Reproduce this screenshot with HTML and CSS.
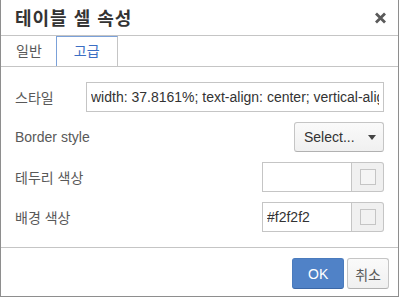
FILE: index.html
```
<!DOCTYPE html>
<html lang="ko">
<head>
    <meta charset="UTF-8">
    <title>테이블 셀 속성</title>
    <link rel="stylesheet" href="styles.css">
</head>
<body>
    <div class="dialog">
        <div class="head">
            <h1>테이블 셀 속성</h1>
            <button class="close" type="button" aria-label="닫기">
                <svg width="13" height="12" viewBox="0 0 13 12">
                    <path d="M2 1.5 L11 10.5 M11 1.5 L2 10.5" stroke="#5a5a5a" stroke-width="2.8" stroke-linecap="butt"/>
                </svg>
            </button>
        </div>

        <div class="tabs">
            <div class="tab">일반</div>
            <div class="tab active">고급</div>
        </div>

        <div class="panel">
            <div class="row">
                <label for="style">스타일</label>
                <input type="text" id="style" class="text wide" value="width: 37.8161%; text-align: center; vertical-align: middle;">
            </div>
            <div class="row">
                <label>Border style</label>
                <button type="button" class="select">
                    <span>Select...</span>
                    <span class="caret"></span>
                </button>
            </div>
            <div class="row">
                <label for="border-color">테두리 색상</label>
                <div class="color">
                    <input type="text" id="border-color" class="text">
                    <button type="button" class="swatch"><i></i></button>
                </div>
            </div>
            <div class="row">
                <label for="bg-color">배경 색상</label>
                <div class="color">
                    <input type="text" id="bg-color" class="text" value="#f2f2f2">
                    <button type="button" class="swatch"><i class="filled"></i></button>
                </div>
            </div>
        </div>

        <div class="foot">
            <button type="button" class="btn primary">OK</button>
            <button type="button" class="btn">취소</button>
        </div>
    </div>
</body>
</html>
```

FILE: styles.css
```
* {
    margin: 0;
    padding: 0;
    box-sizing: border-box;
}

body {
    font-family: 'Liberation Sans', 'Noto Sans CJK KR', sans-serif;
    font-size: 14px;
    color: #333;
    background: #fff;
}

.dialog {
    width: 399px;
    height: 297px;
    border: 1px solid #8e8e8e;
    border-top: none;
    display: flex;
    flex-direction: column;
    background: #fff;
}

.head {
    height: 36px;
    border-bottom: 1px solid #c5c5c5;
    display: flex;
    align-items: center;
    justify-content: space-between;
    padding: 0 10px 1px 14px;
}

.head h1 {
    font-size: 18px;
    font-weight: bold;
    color: #333;
    letter-spacing: 1px;
}

.close {
    border: none;
    background: none;
    width: 16px;
    height: 16px;
    display: flex;
    align-items: center;
    justify-content: center;
    margin-top: 2px;
}

.tabs {
    display: flex;
    height: 31px;
    border-bottom: 1px solid #c5c5c5;
}

.tab {
    height: 30px;
    line-height: 28px;
    padding: 0 13px 0 14px;
    border: 1px solid transparent;
    border-bottom: none;
    color: #595959;
}

.tab.active {
    padding: 0 17px;
    color: #3b6ec4;
    border-color: #7ba1d9;
    border-right-color: #c5c5c5;
}

.panel {
    flex: 1;
    padding: 15px 14px;
    display: flex;
    flex-direction: column;
    gap: 10px;
}

.row {
    display: flex;
    align-items: center;
    justify-content: space-between;
    height: 30px;
}

.row label {
    color: #595959;
    width: 71px;
    flex-shrink: 0;
    white-space: nowrap;
}

.text {
    height: 30px;
    border: 1px solid #c5c5c5;
    padding: 0 4px;
    font-family: 'Liberation Sans', 'Noto Sans CJK KR', sans-serif;
    font-size: 14px;
    color: #333;
    outline: none;
    width: 90px;
}

.text.wide {
    flex: 1;
}

.select {
    width: 90px;
    height: 30px;
    border: 1px solid #c5c5c5;
    border-bottom-color: #b1b1b1;
    border-radius: 3px;
    background: linear-gradient(#fafafa, #f0f0f0);
    display: flex;
    align-items: center;
    justify-content: space-between;
    padding: 0 7px 0 9px;
    font-family: 'Liberation Sans', sans-serif;
    font-size: 14px;
    color: #333;
}

.caret {
    width: 0;
    height: 0;
    border-left: 4px solid transparent;
    border-right: 4px solid transparent;
    border-top: 5px solid #444;
}

.color {
    display: flex;
}

.swatch {
    width: 32px;
    height: 30px;
    border: 1px solid #c5c5c5;
    border-left: none;
    border-radius: 0 3px 3px 0;
    background: #f0f0f0;
    display: flex;
    align-items: center;
    justify-content: center;
}

.swatch i {
    width: 16px;
    height: 16px;
    border: 1px solid #c5c5c5;
    background: #f5f5f5;
}

.swatch i.filled {
    background: #f2f2f2;
}

.foot {
    height: 49px;
    border-top: 1px solid #c5c5c5;
    display: flex;
    justify-content: flex-end;
    gap: 3px;
    padding: 10px 9px 0 0;
}

.btn {
    height: 31px;
    padding: 0 7px;
    border: 1px solid #c5c5c5;
    border-bottom-color: #b1b1b1;
    border-radius: 3px;
    background: linear-gradient(#fafafa, #f0f0f0);
    font-family: 'Liberation Sans', 'Noto Sans CJK KR', sans-serif;
    font-size: 14px;
    color: #595959;
}

.btn.primary {
    width: 52px;
    padding: 0;
    background: #5082c7;
    border-color: #4a7bbd;
    border-bottom-color: #3b67a6;
    color: #fff;
}
```
